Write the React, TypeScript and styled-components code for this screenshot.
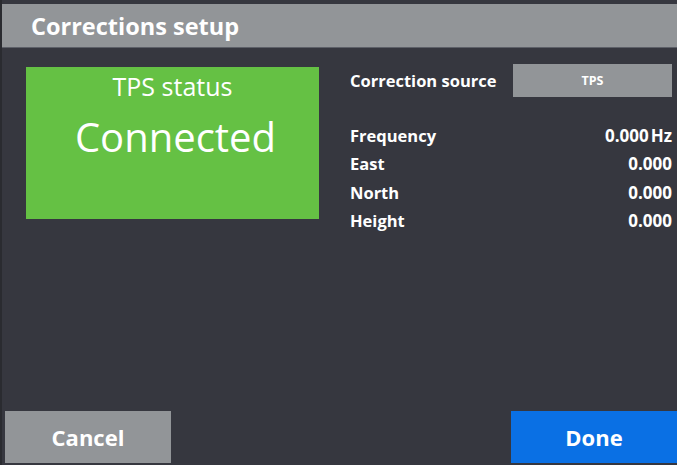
import styled, { createGlobalStyle } from "styled-components";

const GlobalStyle = createGlobalStyle`
  html, body {
    margin: 0;
    padding: 0;
    background: #36373f;
  }
  * {
    box-sizing: border-box;
  }
`;

const READINGS = [
  { label: "Frequency", value: "0.000", unit: "Hz" },
  { label: "East", value: "0.000" },
  { label: "North", value: "0.000" },
  { label: "Height", value: "0.000" },
];

export default function App() {
  return (
    <>
      <GlobalStyle />
      <SCScreen>
        <SCHeader>Corrections setup</SCHeader>

        <SCBody>
          <SCStatus>
            <span>TPS status</span>
            <strong>Connected</strong>
          </SCStatus>

          <SCDetails>
            <SCSourceRow>
              <SCLabel>Correction source</SCLabel>
              <SCSourceButton>TPS</SCSourceButton>
            </SCSourceRow>

            <SCReadings>
              {READINGS.map((r) => (
                <SCReadingRow key={r.label}>
                  <SCLabel>{r.label}</SCLabel>
                  <SCValue>
                    {r.value}
                    {r.unit && <small>{r.unit}</small>}
                  </SCValue>
                </SCReadingRow>
              ))}
            </SCReadings>
          </SCDetails>
        </SCBody>

        <SCFooter>
          <SCButton $variant="secondary">Cancel</SCButton>
          <SCButton $variant="primary">Done</SCButton>
        </SCFooter>
      </SCScreen>
    </>
  );
}

const SCScreen = styled.div`
  width: 677px;
  height: 465px;
  display: flex;
  flex-direction: column;
  background: #36373f;
  border-left: 2px solid #2a2b30;
  font-family: "Open Sans", "Noto Sans", sans-serif;
  color: #ffffff;
  overflow: hidden;
`;

const SCHeader = styled.div`
  margin-top: 4px;
  height: 44px;
  display: flex;
  align-items: center;
  padding-left: 29px;
  background: #929598;
  border-bottom: 1px solid #5d6068;
  font-size: 23.5px;
  font-weight: 700;
`;

const SCBody = styled.div`
  flex: 1;
  display: flex;
  flex-direction: row;
  padding: 19px 5px 0 24px;
`;

const SCStatus = styled.div`
  width: 293px;
  height: 152px;
  background: #65c144;
  display: flex;
  flex-direction: column;
  align-items: center;

  span {
    margin-top: 4px;
    font-size: 25px;
    font-weight: 400;
    line-height: 30px;
  }

  strong {
    margin-top: 11px;
    padding-left: 6px;
    font-size: 40px;
    font-weight: 400;
    line-height: 50px;
  }
`;

const SCDetails = styled.div`
  flex: 1;
  display: flex;
  flex-direction: column;
  padding-left: 31px;
`;

const SCSourceRow = styled.div`
  height: 33px;
  margin-top: -3px;
  display: flex;
  align-items: center;
  justify-content: space-between;
`;

const SCLabel = styled.span`
  font-size: 16.5px;
  font-weight: 700;
`;

const SCSourceButton = styled.div`
  width: 159px;
  height: 33px;
  display: flex;
  align-items: center;
  justify-content: center;
  background: #929598;
  font-size: 12.5px;
  font-weight: 700;
`;

const SCReadings = styled.div`
  display: flex;
  flex-direction: column;
  margin-top: 24px;
`;

const SCReadingRow = styled.div`
  height: 28.5px;
  display: flex;
  align-items: center;
  justify-content: space-between;
`;

const SCValue = styled.span`
  font-size: 17px;
  font-weight: 700;

  small {
    font-size: 17px;
    margin-left: 2px;
  }
`;

const SCFooter = styled.div`
  height: 52px;
  margin-bottom: 2px;
  display: flex;
  justify-content: space-between;
  padding-left: 3px;
`;

const SCButton = styled.div<{ $variant: "primary" | "secondary" }>`
  width: 166px;
  height: 100%;
  display: flex;
  align-items: center;
  justify-content: center;
  font-size: 22px;
  font-weight: 700;
  background: ${(p) => (p.$variant === "primary" ? "#0a70e4" : "#929598")};
`;
